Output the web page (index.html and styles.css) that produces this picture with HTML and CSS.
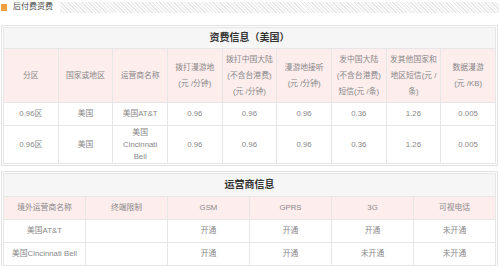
FILE: index.html
```html
<!DOCTYPE html>
<html>
<head>
<meta charset="utf-8">
<link rel="stylesheet" href="styles.css">
</head>
<body>
<div class="topbar">
  <span class="ico"></span>
  <span class="toptitle">后付费资费</span>
  <span class="hatch"></span>
</div>

<div class="sect">
  <table class="t9">
    <tr class="rtitle"><td colspan="9" class="title">资费信息（美国）</td></tr>
    <tr class="rhead">
      <td class="h">分区</td>
      <td class="h">国家或地区</td>
      <td class="h">运营商名称</td>
      <td class="h">拨打漫游地<br>(元 /分钟)</td>
      <td class="h">拨打中国大陆<br>(不含台港费)<br>(元 /分钟)</td>
      <td class="h">漫游地接听<br>(元 /分钟)</td>
      <td class="h">发中国大陆<br>(不含台港费)<br>短信(元 /条)</td>
      <td class="h">发其他国家和<br>地区短信(元 /<br>条)</td>
      <td class="h">数据漫游<br>(元 /KB)</td>
    </tr>
    <tr class="r1">
      <td>0.96区</td><td>美国</td><td>美国AT&amp;T</td><td>0.96</td><td>0.96</td><td>0.96</td><td>0.36</td><td>1.26</td><td>0.005</td>
    </tr>
    <tr class="r2">
      <td>0.96区</td><td>美国</td><td>美国<br>Cincinnati<br>Bell</td><td>0.96</td><td>0.96</td><td>0.96</td><td>0.36</td><td>1.26</td><td>0.005</td>
    </tr>
  </table>
</div>

<div class="sect">
  <table class="t6">
    <tr class="rtitle2"><td colspan="6" class="title">运营商信息</td></tr>
    <tr class="rh2">
      <td class="h">境外运营商名称</td>
      <td class="h">终端限制</td>
      <td class="h">GSM</td>
      <td class="h">GPRS</td>
      <td class="h">3G</td>
      <td class="h">可视电话</td>
    </tr>
    <tr class="rd">
      <td>美国AT&amp;T</td><td></td><td>开通</td><td>开通</td><td>开通</td><td>未开通</td>
    </tr>
    <tr class="rd">
      <td class="nw">美国Cincinnati Bell</td><td></td><td>开通</td><td>开通</td><td>未开通</td><td>未开通</td>
    </tr>
  </table>
</div>
</body>
</html>
```
FILE: styles.css
```css
html, body {
  margin: 0;
  padding: 0;
  background: #fff;
}
body {
  font-family: "Liberation Sans", "Noto Sans CJK SC", sans-serif;
  width: 499px;
}
.topbar {
  display: flex;
  align-items: center;
  height: 14px;
  margin-bottom: 11px;
}
.ico {
  width: 6px;
  height: 7px;
  margin-left: 1px;
  background-image: radial-gradient(circle, #f0a040 0.8px, transparent 1px);
  background-size: 2px 2px;
}
.toptitle {
  font-size: 8px;
  color: #444;
  margin-left: 6px;
  line-height: 14px;
}
.hatch {
  flex: 1;
  height: 11px;
  margin-left: 7px;
  background: repeating-linear-gradient(45deg, #e8e8e8 0 1px, #fafafa 1px 2.5px);
}
.sect {
  border: 1px solid #e2e2e2;
  padding: 1px;
  margin: 0 1px 5px 1px;
}
table {
  width: 100%;
  border-collapse: collapse;
  table-layout: fixed;
}
td {
  border: 1px solid #e6e6e6;
  text-align: center;
  font-size: 7.8px;
  line-height: 12px;
  color: #888;
  padding: 0;
  overflow: visible;
}
td.title {
  background: #f6f6f6;
  font-weight: bold;
  font-size: 10px;
  color: #333;
}
td.h {
  background: #fdeded;
  line-height: 16px;
  white-space: nowrap;
}
td.nw {
  white-space: nowrap;
}
.rtitle { height: 21px; }
.rhead { height: 54px; }
.r1 { height: 23px; }
.r2 { height: 38px; }
.rtitle2 { height: 23px; }
.rh2 { height: 23px; }
.rd { height: 23px; }
```
